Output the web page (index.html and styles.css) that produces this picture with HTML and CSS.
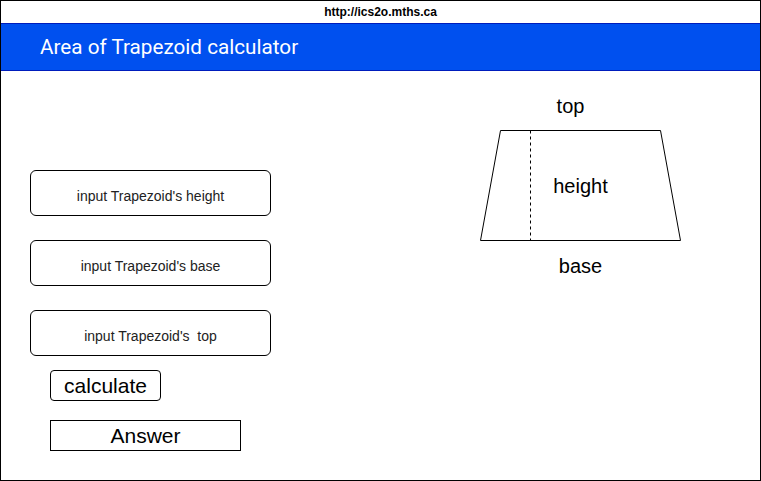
FILE: index.html
```html
<!DOCTYPE html>
<html>
<head>
<meta charset="utf-8">
<link rel="stylesheet" href="styles.css">
</head>
<body>
<div class="frame">
  <div class="urlbar">http://ics2o.mths.ca</div>
  <div class="titlebar">Area of Trapezoid calculator</div>
  <div class="content">
    <div class="form">
      <div class="field">input Trapezoid's height</div>
      <div class="field">input Trapezoid's base</div>
      <div class="field">input Trapezoid's&nbsp; top</div>
      <div class="btn">calculate</div>
      <div class="answer">Answer</div>
    </div>
    <div class="diagram">
      <div class="label label-top">top</div>
      <div class="shape">
        <svg width="201" height="111" viewBox="0 0 201 111">
          <polygon points="20.5,0.5 180.5,0.5 200.5,110.5 0.5,110.5" fill="#fff" stroke="#000" stroke-width="1"/>
          <line x1="50.5" y1="0.5" x2="50.5" y2="110.5" stroke="#000" stroke-width="1" stroke-dasharray="3 3"/>
        </svg>
        <span class="label label-height">height</span>
      </div>
      <div class="label label-base">base</div>
    </div>
  </div>
</div>
</body>
</html>
```
FILE: styles.css
```css
html, body {
  margin: 0;
  padding: 0;
  background: #fff;
}
.frame {
  width: 761px;
  height: 481px;
  box-sizing: border-box;
  border: 1px solid #000;
  font-family: "Liberation Sans", Arial, sans-serif;
  color: #000;
  overflow: hidden;
}
.urlbar {
  height: 22px;
  line-height: 22px;
  text-align: center;
  font-size: 12px;
  font-weight: bold;
}
.titlebar {
  height: 48px;
  box-sizing: border-box;
  margin: 0 -1px;
  border: 1px solid #001dbc;
  background: #0050ef;
  color: #fff;
  font-family: Roboto, "Liberation Sans", sans-serif;
  font-size: 20.7px;
  line-height: 46px;
  padding-left: 39px;
}
.content {
  display: flex;
}
.form {
  display: flex;
  flex-direction: column;
  padding-top: 99px;
  padding-left: 29px;
  width: 241px;
}
.field {
  box-sizing: border-box;
  width: 241px;
  height: 46px;
  border: 1px solid #000;
  border-radius: 6px;
  display: flex;
  align-items: center;
  justify-content: center;
  padding-top: 5px;
  font-size: 14px;
  color: #222;
  margin-bottom: 24px;
}
.field:nth-child(3) {
  margin-bottom: 14px;
}
.btn {
  box-sizing: border-box;
  margin-left: 20px;
  width: 111px;
  height: 31px;
  border: 1px solid #000;
  border-radius: 4px;
  display: flex;
  align-items: center;
  justify-content: center;
  font-size: 21px;
  margin-bottom: 19px;
}
.answer {
  box-sizing: border-box;
  margin-left: 20px;
  width: 191px;
  height: 31px;
  border: 1px solid #000;
  display: flex;
  align-items: center;
  justify-content: center;
  font-size: 21px;
}
.diagram {
  margin-left: 209px;
  padding-top: 23px;
  width: 201px;
  display: flex;
  flex-direction: column;
}
.label {
  font-size: 20px;
  line-height: 24px;
  height: 24px;
  text-align: center;
}
.label-top {
  padding-right: 20px;
  margin-bottom: 12px;
}
.shape {
  position: relative;
  height: 111px;
  margin-bottom: 13px;
}
.shape svg {
  display: block;
}
.label-height {
  position: absolute;
  left: 0;
  right: 0;
  top: 44px;
}
```
